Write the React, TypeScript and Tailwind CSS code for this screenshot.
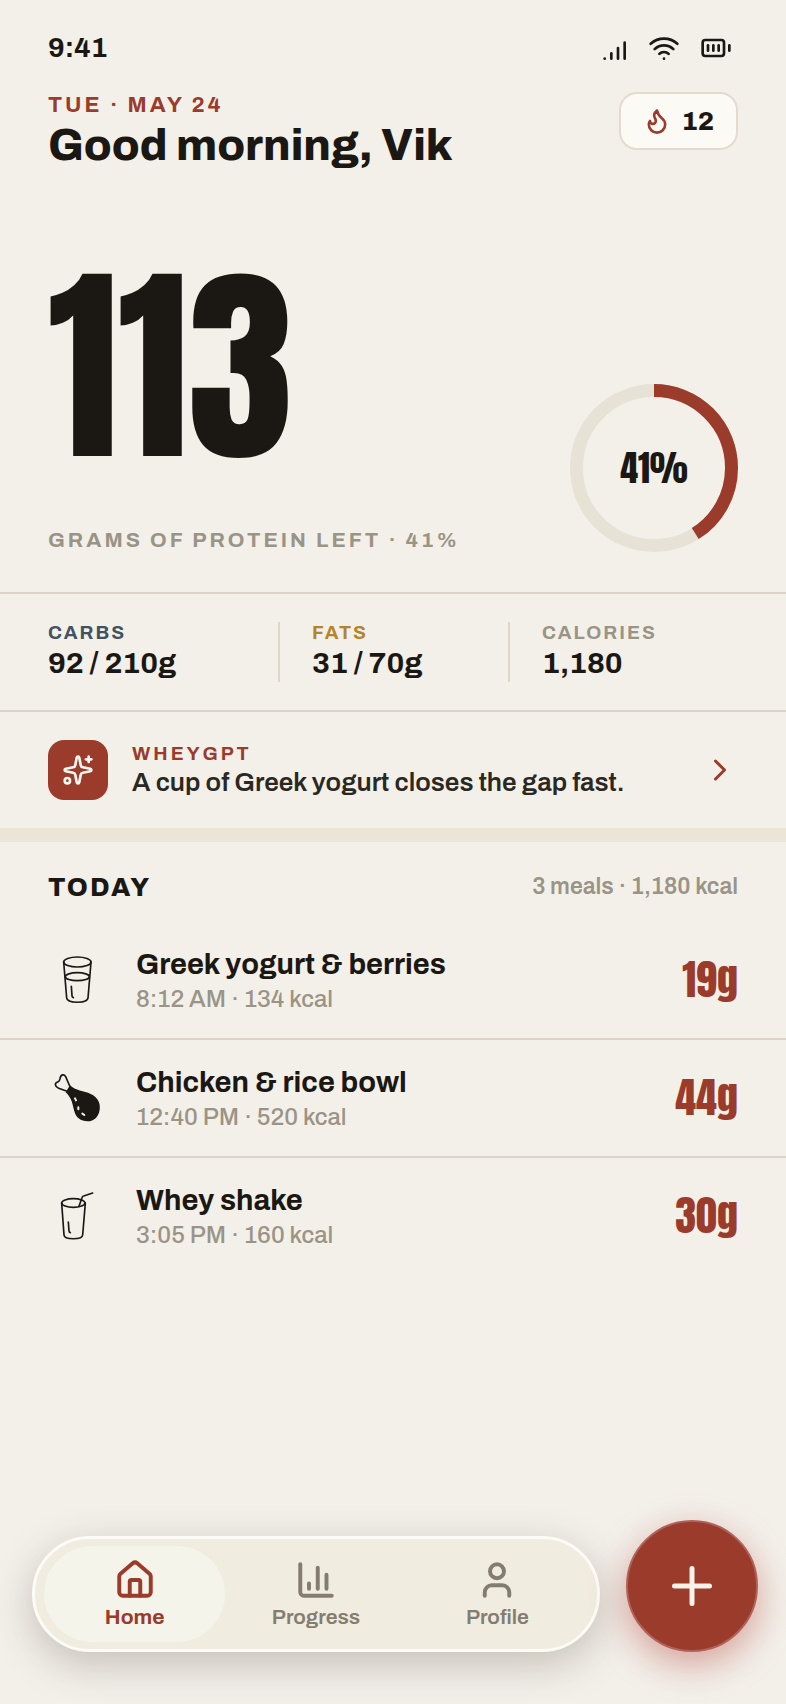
import { useState } from "react";
import {
  BatteryFull,
  ChartColumn,
  ChevronRight,
  House,
  Plus,
  SignalHigh,
  Sparkles,
  User,
  Wifi,
} from "lucide-react";

const macros = [
  { label: "CARBS", value: "92 / 210g", color: "text-[#435160]" },
  { label: "FATS", value: "31 / 70g", color: "text-[#b3842c]" },
  { label: "CALORIES", value: "1,180", color: "text-[#9a9486]" },
];

const meals = [
  { name: "Greek yogurt & berries", meta: "8:12 AM · 134 kcal", protein: "19g", icon: <GlassIcon /> },
  { name: "Chicken & rice bowl", meta: "12:40 PM · 520 kcal", protein: "44g", icon: <DrumstickIcon /> },
  { name: "Whey shake", meta: "3:05 PM · 160 kcal", protein: "30g", icon: <ShakeIcon /> },
];

const tabs = [
  { id: "home", label: "Home", Icon: House },
  { id: "progress", label: "Progress", Icon: ChartColumn },
  { id: "profile", label: "Profile", Icon: User },
];

function FlameIcon() {
  return (
    <svg className="size-7 text-[#9a3b2b]" viewBox="0 0 24 24" fill="none" stroke="currentColor" strokeWidth="2.25" strokeLinecap="round" strokeLinejoin="round" aria-hidden="true">
      <path d="M8.5 14.5A2.5 2.5 0 0 0 11 12c0-1.38-.5-2-1-3-1.072-2.143-.224-4.054 2-6 .5 2.5 2 4.9 4 6.5 2 1.6 3 3.5 3 5.5a7 7 0 1 1-14 0c0-1.153.433-2.294 1-3a2.5 2.5 0 0 0 2.5 2.5z" />
    </svg>
  );
}

function GlassIcon() {
  return (
    <svg className="size-15" viewBox="0 0 180 180" fill="none" stroke="currentColor" strokeWidth="5" strokeLinecap="round" strokeLinejoin="round" aria-hidden="true">
      <ellipse cx="88" cy="36" rx="41" ry="15" />
      <path d="M47 36l9 108c1 17 63 17 64 0l9-108" />
      <ellipse cx="88" cy="80" rx="36" ry="12" />
      <path d="M70 109l2 28q0 5 4 6" />
    </svg>
  );
}

function DrumstickIcon() {
  return (
    <svg className="size-15" viewBox="0 0 180 180" fill="none" stroke="currentColor" strokeWidth="5" strokeLinecap="round" strokeLinejoin="round" aria-hidden="true">
      <path d="M57 70L32 61C20 56 19 45 29 42c5-1 6-5 7-10 2-13 12-15 17-6l12 28" />
      <path fill="currentColor" stroke="none" d="M66 52C82 69 108 68 128 78c22 10 30 28 27 47-3 21-17 35-36 35-21 0-35-11-40-30-6-20-6-38-26-57z" />
      <g className="text-[#f3f0ea]" strokeWidth="6">
        <path d="M81 91l3 6M91 118l0 6M103 137l6 4" />
      </g>
    </svg>
  );
}

function ShakeIcon() {
  return (
    <svg className="size-15" viewBox="0 0 180 180" fill="none" stroke="currentColor" strokeWidth="5" strokeLinecap="round" strokeLinejoin="round" aria-hidden="true">
      <ellipse cx="76" cy="51" rx="35" ry="13" />
      <path d="M41 51l7 96c1 15 55 15 56 0l8-96" />
      <path d="M93 61l9-26q1-4 5-5l27-9" />
      <path d="M61 108l2 27q0 4 4 5" />
    </svg>
  );
}

// Donut drawn from 12 o'clock, clockwise
function ProteinRing({ percent }: { percent: number }) {
  const r = 77.5;
  const length = 2 * Math.PI * r;
  return (
    <div className="relative size-42 shrink-0">
      <svg className="size-full -rotate-90" viewBox="0 0 168 168" fill="none" strokeWidth="13" aria-hidden="true">
        <circle cx="84" cy="84" r={r} className="stroke-[#e6e2d6]" />
        <circle cx="84" cy="84" r={r} className="stroke-[#9a3b2b]" strokeDasharray={`${(length * percent) / 100} ${length}`} />
      </svg>
      <span className="absolute inset-0 flex items-center justify-center font-['Anton','Liberation_Sans',sans-serif] text-4xl">
        {percent}%
      </span>
    </div>
  );
}

export default function App() {
  const [activeTab, setActiveTab] = useState("home");

  return (
    <div className="flex min-h-screen flex-col bg-[#f3f0ea] font-['Archivo','Liberation_Sans',Arial,sans-serif] text-[#1b1813]">
      {/* Status bar */}
      <div className="flex items-center justify-between pt-8 pr-[54px] pl-12">
        <span className="text-[28px] leading-8 font-bold">9:41</span>
        <div className="flex items-center gap-5">
          <div className="flex items-center gap-3.5">
            <SignalHigh size={32} />
            <Wifi size={32} />
          </div>
          <BatteryFull size={32} />
        </div>
      </div>

      {/* Greeting */}
      <header className="flex items-start justify-between px-12 pt-7">
        <div>
          <p className="text-[22px] leading-[26px] font-bold tracking-[3px] text-[#9a3b2b]">TUE · MAY 24</p>
          <h1 className="text-[44px] leading-[54px] font-extrabold">Good morning, Vik</h1>
        </div>
        <button type="button" className="flex h-[58px] items-center gap-2.5 rounded-[18px] border-2 border-[#e3dccc] bg-[#fcfaf5] px-[22px] text-[26px] font-extrabold">
          <FlameIcon />
          12
        </button>
      </header>

      {/* Protein left */}
      <section className="flex items-end justify-between border-b-2 border-[#dbd3c5] px-12 pt-[90px] pb-10">
        <div>
          <p className="font-['Anton','Liberation_Sans',sans-serif] text-[212px] leading-[210px]">113</p>
          <p className="mt-14 text-[21px] leading-6 font-bold tracking-[3px] text-[#9a9486]">GRAMS OF PROTEIN LEFT · 41%</p>
        </div>
        <ProteinRing percent={41} />
      </section>

      {/* Macros */}
      <section className="grid grid-cols-3 border-b-2 border-[#dbd3c5] px-12 py-7">
        {macros.map((macro) => (
          <div key={macro.label} className="border-l-2 border-[#ddd7c8] pl-8 first:border-l-0 first:pl-0">
            <p className={`text-[19px] leading-[22px] font-bold tracking-[2px] ${macro.color}`}>{macro.label}</p>
            <p className="text-[30px] leading-[38px] font-bold">{macro.value}</p>
          </div>
        ))}
      </section>

      {/* Assistant tip */}
      <button type="button" className="flex items-center gap-6 border-b-14 border-[#ece4d7] px-12 py-7 text-left">
        <span className="flex size-15 shrink-0 items-center justify-center rounded-2xl bg-[#9a3b2b] text-[#fbf6ee]">
          <Sparkles size={32} />
        </span>
        <span className="flex-1">
          <span className="block text-[19px] leading-6 font-bold tracking-[3px] text-[#9a3b2b]">WHEYGPT</span>
          <span className="block text-[26px] leading-8 font-semibold text-[#2b2721]">A cup of Greek yogurt closes the gap fast.</span>
        </span>
        <ChevronRight size={36} className="text-[#9a3b2b]" />
      </button>

      {/* Meals */}
      <section>
        <div className="flex items-center justify-between px-12 pt-7 pb-[18px]">
          <h2 className="text-[26px] leading-[34px] font-extrabold tracking-[2px]">TODAY</h2>
          <p className="text-[23px] leading-[34px] font-semibold text-[#9a9486]">3 meals · 1,180 kcal</p>
        </div>
        <ul className="divide-y-2 divide-[#dbd3c5]">
          {meals.map((meal) => (
            <li key={meal.name} className="flex items-center gap-7 px-12 py-6">
              {meal.icon}
              <div className="flex-1">
                <h3 className="text-[29px] leading-[38px] font-bold">{meal.name}</h3>
                <p className="text-2xl leading-[30px] font-medium text-[#9a9486]">{meal.meta}</p>
              </div>
              <span className="font-['Anton','Liberation_Sans',sans-serif] text-[42px] leading-[60px] text-[#9a3b2b]">
                {meal.protein}
              </span>
            </li>
          ))}
        </ul>
      </section>

      {/* Tab bar */}
      <div className="mt-auto flex items-end gap-[26px] pt-10 pr-7 pb-[52px] pl-8">
        <nav className="grid flex-1 grid-cols-3 rounded-full border-[3px] border-[#fcfbf6] bg-[#f0ecdf] px-[9px] py-[7px] shadow-[0_12px_40px_rgba(60,56,40,0.26)]">
          {tabs.map(({ id, label, Icon }) => (
            <button
              key={id}
              type="button"
              onClick={() => setActiveTab(id)}
              aria-current={activeTab === id ? "page" : undefined}
              className={`flex h-24 flex-col items-center justify-center gap-1 rounded-full text-[21px] leading-6 ${
                activeTab === id ? "bg-[#f5f4ea] font-bold text-[#9a3b2b]" : "font-semibold text-[#827d70]"
              }`}
            >
              <Icon size={42} strokeWidth={2.25} />
              {label}
            </button>
          ))}
        </nav>
        <button
          type="button"
          aria-label="Add meal"
          className="flex size-33 shrink-0 items-center justify-center rounded-full border-2 border-[#b0625a] bg-[#9a3b2b] text-[#fbf2ea] shadow-[0_12px_36px_rgba(170,50,40,0.42)]"
        >
          <Plus size={60} />
        </button>
      </div>
    </div>
  );
}
